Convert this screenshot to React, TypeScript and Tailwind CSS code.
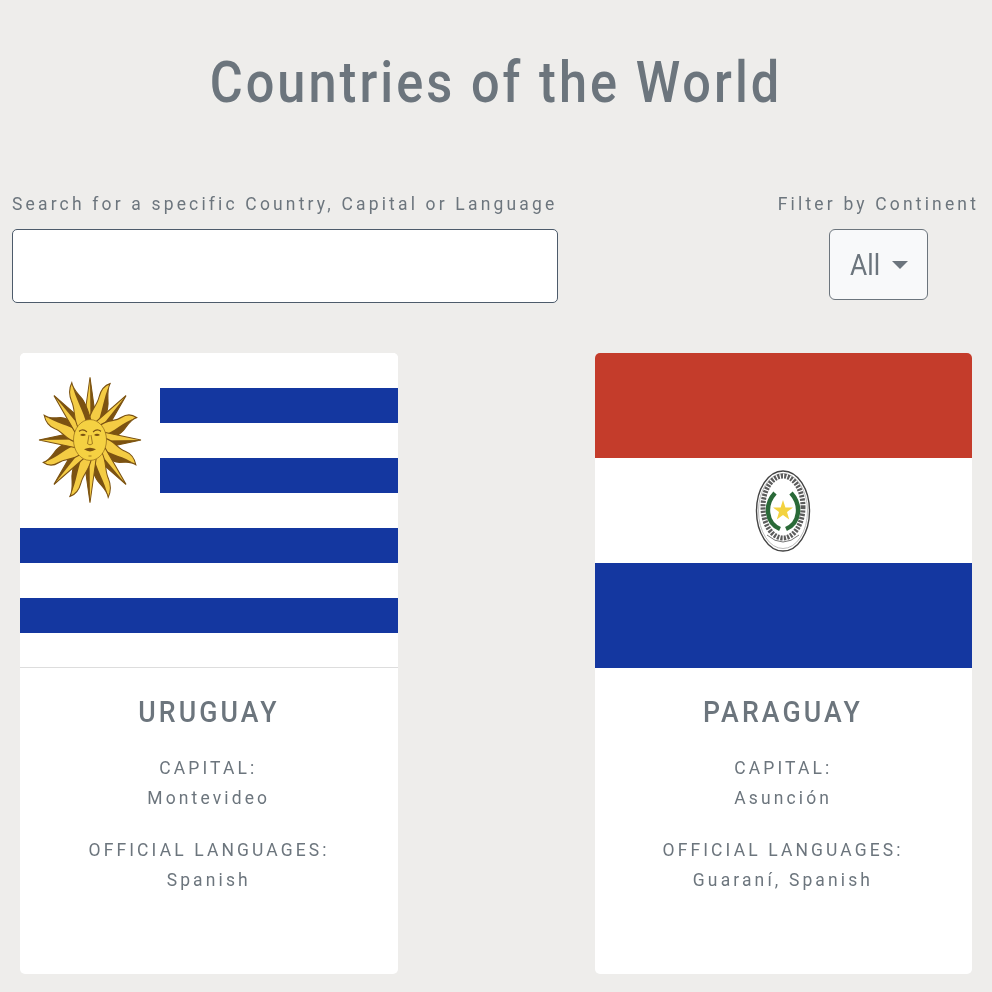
const textColor = "text-[#6c757d]";

function Sun() {
  const rays = Array.from({ length: 16 }, (_, i) => i * 22.5);
  return (
    <svg viewBox="0 0 104 104" preserveAspectRatio="none" className="w-[104px] h-[128px] blur-[0.4px]">
      <g transform="translate(52 52)">
        {rays.map((a, i) =>
          i % 2 === 0 ? (
            <g key={a} transform={`rotate(${a})`}>
              <path d="M-6.5 -13 L0 -51 L6.5 -13 Z" fill="#f4cc44" stroke="#7b5212" strokeWidth="1" />
              <path d="M0 -51 L6.5 -13 L0.5 -13 Z" fill="#7b5212" />
            </g>
          ) : (
            <g key={a} transform={`rotate(${a})`}>
              <path
                d="M-7 -13 C-9 -23 -4 -28 -5 -36 C-5.5 -42 -3 -47 1 -50 C0 -44 3 -40 5.5 -34 C8 -27 7 -20 7 -13 Z"
                fill="#f4cc44"
                stroke="#7b5212"
                strokeWidth="1"
              />
              <path d="M1 -50 C0 -44 3 -40 5.5 -34 C8 -27 7 -20 7 -13 L1.5 -13 C3.5 -24 -1 -36 1 -50 Z" fill="#7b5212" />
            </g>
          )
        )}
        <ellipse cx="0" cy="0" rx="16.5" ry="16.6" fill="#f5d142" stroke="#8a6116" strokeWidth="0.6" />
        <path d="M-11 -7 Q-7 -9.5 -3 -6.5 M3 -6.5 Q7 -9.5 11 -7" fill="none" stroke="#7b5212" strokeWidth="1" />
        <path d="M-10 -4 Q-7 -6 -4 -4 Q-7 -2.5 -10 -4 Z M4 -4 Q7 -6 10 -4 Q7 -2.5 4 -4 Z" fill="#7b5212" />
        <path d="M-1 -4 L-2.5 3 Q0 5 2.5 3 L1 -4" fill="none" stroke="#8a6116" strokeWidth="0.7" />
        <path d="M-6 7.5 Q0 5 6 7.5 Q0 11 -6 7.5 Z" fill="#7b5212" />
        <path d="M-1.5 13 L1.5 13" stroke="#8a6116" strokeWidth="0.7" />
      </g>
    </svg>
  );
}

function Seal() {
  return (
    <svg viewBox="0 0 56 84" className="w-[56px] h-[84px] blur-[0.6px]">
      <ellipse cx="28" cy="42" rx="26.5" ry="40" fill="#fff" stroke="#444" strokeWidth="1.4" />
      <ellipse cx="28" cy="42" rx="24.5" ry="37.5" fill="none" stroke="#aaa" strokeWidth="0.8" />
      <ellipse cx="28" cy="38" rx="20" ry="31" fill="none" stroke="#333" strokeWidth="5" strokeDasharray="2.2 1.2" opacity="0.8" />
      <path d="M20 24 C9 36 11 54 25 60" fill="none" stroke="#2a6a38" strokeWidth="4.5" />
      <path d="M36 24 C47 36 45 54 31 60" fill="none" stroke="#2a6a38" strokeWidth="4.5" />
      <polygon points="28,31 30.4,38.5 38,38.5 32,43 34.2,50.5 28,46 21.8,50.5 24,43 18,38.5 25.6,38.5" fill="#f3d23f" />
      <path d="M12 66 Q28 80 44 66" fill="none" stroke="#777" strokeWidth="1" />
    </svg>
  );
}

function UruguayFlag() {
  return (
    <div className="relative h-[315px] bg-white border-b border-[#dddddd]">
      <div className="flex flex-col pt-[35px]">
        <div className="h-[35px] ml-[140px] bg-[#1437a0]" />
        <div className="h-[35px]" />
        <div className="h-[35px] ml-[140px] bg-[#1437a0]" />
        <div className="h-[35px]" />
        <div className="h-[35px] bg-[#1437a0]" />
        <div className="h-[35px]" />
        <div className="h-[35px] bg-[#1437a0]" />
      </div>
      <div className="absolute left-[18px] top-[23px]">
        <Sun />
      </div>
    </div>
  );
}

function ParaguayFlag() {
  return (
    <div className="flex flex-col h-[315px]">
      <div className="h-[105px] bg-[#c43c2b]" />
      <div className="h-[105px] bg-white flex items-center justify-center">
        <Seal />
      </div>
      <div className="h-[105px] bg-[#1437a0]" />
    </div>
  );
}

function Card({ flag, name, capital, languages }: { flag: React.ReactNode; name: string; capital: string; languages: string }) {
  const line = "text-[19px] leading-[30px] tracking-[3.4px] whitespace-nowrap scale-x-[0.92]";
  return (
    <div className="w-[377.5px] h-[621px] bg-white rounded-[5px] overflow-hidden">
      {flag}
      <div className={`flex flex-col items-center ${textColor}`}>
        <h3 className="mt-[26px] text-[29px] leading-[36px] font-medium tracking-[3.4px] scale-x-[0.92]">{name}</h3>
        <p className={`mt-[23px] ${line}`}>CAPITAL:</p>
        <p className={line}>{capital}</p>
        <p className={`mt-[22px] ${line}`}>OFFICIAL LANGUAGES:</p>
        <p className={line}>{languages}</p>
      </div>
    </div>
  );
}

export default function App() {
  return (
    <div className={`min-h-[992px] bg-[#eeedeb] font-['Roboto',sans-serif] overflow-hidden ${textColor}`}>
      <h1 className="pt-[45px] text-center text-[58px] leading-[74px] font-medium tracking-[3.5px] scale-x-[0.87]">
        Countries of the World
      </h1>
      <div className="mt-[70px] flex justify-between pl-3 pr-[14px]">
        <div className="w-[546px]">
          <label className="block origin-left scale-x-[0.92] text-[19px] leading-[29px] tracking-[3.45px] whitespace-nowrap">
            Search for a specific Country, Capital or Language
          </label>
          <input
            aria-label="Search"
            className="mt-[11px] block w-full h-[74px] bg-white border border-[#4d5b6b] rounded-[5px]"
          />
        </div>
        <div className="w-[200px] flex flex-col items-center">
          <label className="block scale-x-[0.92] text-[19px] leading-[29px] tracking-[3.45px] whitespace-nowrap">
            Filter by Continent
          </label>
          <button className="mt-[11px] w-[99px] h-[71px] bg-[#f8f9fa] border border-[#6c757d] rounded-[6px] flex items-center justify-center gap-[10px]">
            <span className="text-[30px] scale-x-[0.88]">All</span>
            <span className="w-0 h-0 border-x-[8px] border-x-transparent border-t-[8px] border-t-[#6c757d]" />
          </button>
        </div>
      </div>
      <div className="mt-[50px] flex justify-between pl-5 pr-5">
        <Card flag={<UruguayFlag />} name="URUGUAY" capital="Montevideo" languages="Spanish" />
        <Card flag={<ParaguayFlag />} name="PARAGUAY" capital="Asunción" languages="Guaraní, Spanish" />
      </div>
    </div>
  );
}
